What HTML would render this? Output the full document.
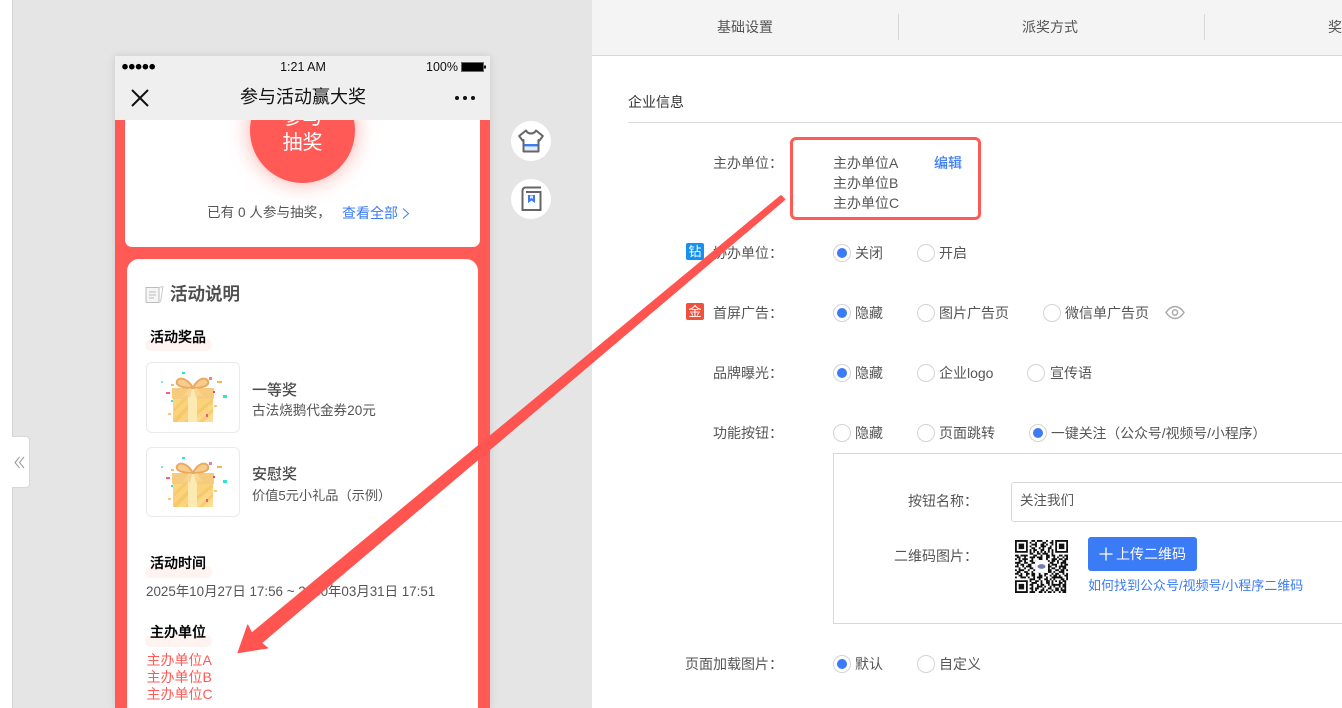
<!DOCTYPE html>
<html lang="zh">
<head>
<meta charset="utf-8">
<style>
html,body{margin:0;padding:0;width:1342px;height:708px;overflow:hidden;background:#fff}
body{position:relative;font-family:"Liberation Sans","Noto Sans CJK SC",sans-serif;font-size:14px;color:#555}
.a{position:absolute;white-space:nowrap}
.t{position:absolute;white-space:nowrap;line-height:20px;height:20px}
.r{position:absolute;border:1px solid #d4d4d4;border-radius:50%;box-sizing:border-box;background:#fff;width:18px;height:18px}
.r.on:after{content:"";position:absolute;left:3px;top:3px;width:10px;height:10px;border-radius:50%;background:#3b7bf6}
.lab{position:absolute;white-space:nowrap;line-height:20px;text-align:right;width:127px}
.sub{position:absolute;left:145px;width:67px;height:12px;background:#fff3f2;border-radius:6px}
.subt{position:absolute;left:150px;font-size:14px;font-weight:500;color:#000;line-height:20px;white-space:nowrap;-webkit-text-stroke:.25px #000}
.thumb{position:absolute;left:146px;width:94px;border:1px solid #eaeaea;border-radius:6px;box-sizing:border-box;background:#fff}
</style>
</head>
<body>
<!-- left zone -->
<div class="a" style="left:12px;top:0;width:580px;height:708px;background:#e5e5e5"></div>
<div class="a" style="left:12px;top:0;width:1px;height:708px;background:#d2d2d2"></div>
<div class="a" style="left:12px;top:436px;width:18px;height:52px;background:#fff;border:1px solid #d8d8d8;border-left:0;border-radius:0 4px 4px 0;box-sizing:border-box"></div>
<svg class="a" style="left:14px;top:456px" width="12" height="13" viewBox="0 0 12 13"><path d="M5.500 1 1 6.500 5.500 12M10 1 5.500 6.500 10 12" fill="none" stroke="#999" stroke-width="1"/></svg>

<!-- phone -->
<div class="a" style="left:115px;top:56px;width:375px;height:652px;background:#ff5a56;box-shadow:0 0 8px rgba(0,0,0,.12);overflow:hidden">
  <div class="a" style="left:10px;top:0;width:355px;height:191px;background:#fff;border-radius:0 0 7px 7px"></div>
  <div class="a" style="left:135px;top:22px;width:105px;height:105px;border-radius:50%;background:#ff5a56;box-shadow:0 0 20px rgba(255,90,86,.5)"></div>
  <div class="a" style="left:135px;top:50px;width:105px;text-align:center;color:#fff;font-size:20px;line-height:25px">参与<br>抽奖</div>
  <div class="a" style="left:0;top:0;width:375px;height:64px;background:#efefef"></div>
  <div class="a" style="left:12px;top:203px;width:351px;height:460px;background:#fff;border-radius:12px"></div>
</div>
<svg class="a" style="left:121px;top:62px" width="36" height="9"><g fill="#000"><circle cx="4" cy="4.700" r="2.800"/><circle cx="10.800" cy="4.700" r="2.800"/><circle cx="17.600" cy="4.700" r="2.800"/><circle cx="24.400" cy="4.700" r="2.800"/><circle cx="31.200" cy="4.700" r="2.800"/></g></svg>
<div class="t" style="left:252px;top:57px;width:102px;text-align:center;font-size:12.500px;color:#111">1:21 AM</div>
<div class="t" style="left:426px;top:57px;font-size:12.500px;color:#111">100%</div>
<svg class="a" style="left:461px;top:62px" width="26" height="11"><rect x=".5" y=".5" width="22" height="9" fill="#000" stroke="#666"/><rect x="23" y="3.500" width="2" height="3" fill="#111"/></svg>
<svg class="a" style="left:131px;top:89px" width="18" height="18"><path d="M1 1 17 17M17 1 1 17" stroke="#111" stroke-width="2" fill="none"/></svg>
<div class="t" style="left:203px;top:86px;width:200px;text-align:center;font-size:18px;line-height:22px;height:22px;color:#111">参与活动赢大奖</div>
<svg class="a" style="left:453px;top:94px" width="24" height="8"><g fill="#111"><circle cx="4" cy="4" r="2"/><circle cx="12" cy="4" r="2"/><circle cx="20" cy="4" r="2"/></g></svg>

<div class="t" style="left:207px;top:203px;font-size:13.600px;color:#555">已有 0 人参与抽奖，</div>
<div class="t" style="left:342px;top:203px;font-size:14px;color:#3b7bf6">查看全部</div>
<svg class="a" style="left:402px;top:207px" width="9" height="12"><path d="M1 1.500 6.500 6.500 1 11.500" fill="none" stroke="#3b7bf6" stroke-width="1"/></svg>

<!-- side buttons -->
<div class="a" style="left:511px;top:121px;width:40px;height:40px;border-radius:50%;background:#fff"></div>
<svg class="a" style="left:518px;top:129px" width="26" height="24" viewBox="0 0 26 24"><path d="M8 1.500 1.200 7l3.300 4.500 1-.5V22.500h15V11l1 .5L24.800 7 18 1.500c-1 2-3 3-5 3s-4-1-5-3z" fill="#fff" stroke="#666" stroke-width="2" stroke-linejoin="round"/><rect x="6.500" y="17" width="13" height="4.500" fill="#e3eafa"/><rect x="6.500" y="15" width="13" height="2.400" fill="#3b7bf6"/></svg>
<div class="a" style="left:511px;top:179px;width:40px;height:40px;border-radius:50%;background:#fff"></div>
<svg class="a" style="left:519px;top:185px" width="24" height="26" viewBox="0 0 24 26"><path d="M22 2.500H7C4.500 2.500 3.500 4 3.500 6V25h18V7H7" fill="none" stroke="#666" stroke-width="2"/><path d="M9 10v8l3.500-2.500L16 18v-8z" fill="#3b7bf6"/><path d="M11 10.500v3.500l1.500-1 1.500 1v-3.500z" fill="#dfe9fd"/></svg>

<!-- desc -->
<svg class="a" style="left:145px;top:285px" width="19" height="19" viewBox="0 0 19 19"><path d="M1 2.500h13V17.500H2c-.6 0-1-.4-1-1z" fill="#f5f5f5" stroke="#bbb"/><path d="M14 2.500 18 1.500 15.500 17" fill="none" stroke="#ccc"/><path d="M4 7h7M4 10h7M4 13h5" stroke="#bbb" stroke-width="1.100"/></svg>
<div class="t" style="left:170px;top:284px;font-size:17.500px;font-weight:500;color:#4c4c4c;-webkit-text-stroke:.3px #4c4c4c">活动说明</div>

<div class="sub" style="top:339px"></div>
<div class="subt" style="top:327px">活动奖品</div>

<div class="thumb" style="top:362px;height:71px"></div>
<div class="thumb" style="top:447px;height:70px"></div>
<svg class="a" style="left:160px;top:370px" width="70" height="58" viewBox="0 0 70 58">
<defs><linearGradient id="g" x1="0" y1="0" x2="1" y2="1"><stop offset="0" stop-color="#fbd67f"/><stop offset=".5" stop-color="#fad27a"/><stop offset="1" stop-color="#fde095"/></linearGradient>
<g id="gift">
<rect x="13" y="26" width="40" height="26" fill="url(#g)"/>
<path d="M14 38 26 26h4L14 42zM14 49 37 26h3L17 52h-3zM24 52 53 28v4L29 52zM38 52 53 38v4L43 52z" fill="#f6bd5f" opacity=".55"/>
<rect x="12" y="18" width="42" height="11" rx="1" fill="#f7cb7e"/>
<rect x="28" y="18" width="9" height="34" fill="#fdeab2"/>
<path d="M33 18C28 9 20 6 17 11c-2 5 6 7 16 7zM33 18c4-9 12-12 15-7 2 5-6 7-15 7z" fill="#f6cd8a" stroke="#eba860" stroke-width="2"/>
<path d="M29 18 23 27 27 25 30 28 32 19zM37 18 43 27 39 25 36 28 34 19z" fill="#f8d691"/>
<rect x="22" y="2" width="3" height="2" fill="#2fe6c5"/><rect x="1" y="11" width="2" height="2" fill="#7ce9de"/><rect x="11" y="14" width="3" height="2" fill="#f8bb5a"/><rect x="6" y="22" width="4" height="2" fill="#f2607a"/><rect x="49" y="7" width="3" height="3" fill="#f27a9a"/><rect x="57" y="11" width="5" height="2" fill="#f6b64c"/><rect x="63" y="25" width="4" height="3" fill="#2fe6c5"/><rect x="11" y="30" width="2" height="2" fill="#2fe6c5"/><rect x="8" y="43" width="3" height="2" fill="#f6c97a"/><rect x="53" y="21" width="2" height="2" fill="#e24a60"/><rect x="54" y="35" width="3" height="2" fill="#f6c97a"/><rect x="46" y="44" width="2" height="3" fill="#e85a80"/>
</g></defs>
<use href="#gift"/>
</svg>
<svg class="a" style="left:160px;top:455px" width="70" height="58" viewBox="0 0 70 58"><use href="#gift"/></svg>
<div class="t" style="left:252px;top:381px;font-size:15px;font-weight:500;color:#4c4c4c">一等奖</div>
<div class="t" style="left:252px;top:401px;font-size:13.600px;color:#555">古法烧鹅代金券20元</div>
<div class="t" style="left:252px;top:465px;font-size:15px;font-weight:500;color:#4c4c4c">安慰奖</div>
<div class="t" style="left:252px;top:486px;font-size:13.200px;color:#555">价值5元小礼品（示例）</div>

<div class="sub" style="top:566px"></div>
<div class="subt" style="top:553px">活动时间</div>
<div class="t" style="left:146px;top:582px;font-size:13.400px;color:#555">2025年10月27日 17:56 ~ 2030年03月31日 17:51</div>
<div class="sub" style="top:635px"></div>
<div class="subt" style="top:622px">主办单位</div>
<div class="a" style="left:146.500px;top:652px;font-size:14px;line-height:17px;color:#ff5a56">主办单位A<br>主办单位B<br>主办单位C</div>

<!-- right panel -->
<div class="a" style="left:592px;top:0;width:750px;height:56px;background:#f4f4f4;border-bottom:1px solid #d8d8d8;box-sizing:border-box"></div>
<div class="t" style="left:717px;top:17px;color:#555">基础设置</div>
<div class="a" style="left:898px;top:14px;width:1px;height:26px;background:#d8d8d8"></div>
<div class="t" style="left:1022px;top:17px;color:#555">派奖方式</div>
<div class="a" style="left:1204px;top:14px;width:1px;height:26px;background:#d8d8d8"></div>
<div class="t" style="left:1328px;top:17px;color:#555">奖品设置</div>

<div class="t" style="left:628px;top:92px;color:#333">企业信息</div>
<div class="a" style="left:628px;top:122px;width:714px;height:1px;background:#dcdcdc"></div>

<div class="lab" style="left:656px;top:153px">主办单位：</div>
<div class="a" style="left:833px;top:153px;line-height:20px">主办单位A<br>主办单位B<br>主办单位C</div>
<div class="t" style="left:934px;top:153px;color:#3b7bf6;-webkit-text-stroke:.2px #3b7bf6">编辑</div>

<div class="lab" style="left:656px;top:243px">协办单位：</div>
<div class="a" style="left:686px;top:243px;width:18px;height:17px;background:#1890f0;border-radius:2px;color:#fff;font-size:13px;line-height:18px;text-align:center">钻</div>
<div class="r on" style="left:833px;top:244px"></div><div class="t" style="left:855px;top:243px">关闭</div>
<div class="r" style="left:917px;top:244px"></div><div class="t" style="left:939px;top:243px">开启</div>

<div class="a" style="left:686px;top:303px;width:18px;height:17px;background:#f0503e;border-radius:2px;color:#fff;font-size:13px;line-height:18px;text-align:center">金</div>
<div class="lab" style="left:656px;top:303px">首屏广告：</div>
<div class="r on" style="left:833px;top:304px"></div><div class="t" style="left:855px;top:303px">隐藏</div>
<div class="r" style="left:917px;top:304px"></div><div class="t" style="left:939px;top:303px">图片广告页</div>
<div class="r" style="left:1043px;top:304px"></div><div class="t" style="left:1065px;top:303px">微信单广告页</div>
<svg class="a" style="left:1165px;top:305px" width="20" height="15" viewBox="0 0 20 15"><path d="M1 7.500C4 3 7 1.500 10 1.500s6 1.500 9 6c-3 4.500-6 6-9 6s-6-1.500-9-6z" fill="none" stroke="#aaa" stroke-width="1.500"/><circle cx="10" cy="7.500" r="2.600" fill="none" stroke="#aaa" stroke-width="1.500"/></svg>

<div class="lab" style="left:656px;top:363px">品牌曝光：</div>
<div class="r on" style="left:833px;top:364px"></div><div class="t" style="left:855px;top:363px">隐藏</div>
<div class="r" style="left:917px;top:364px"></div><div class="t" style="left:939px;top:363px">企业logo</div>
<div class="r" style="left:1027px;top:364px"></div><div class="t" style="left:1050px;top:363px">宣传语</div>

<div class="lab" style="left:656px;top:423px">功能按钮：</div>
<div class="r" style="left:833px;top:424px"></div><div class="t" style="left:855px;top:423px">隐藏</div>
<div class="r" style="left:917px;top:424px"></div><div class="t" style="left:939px;top:423px">页面跳转</div>
<div class="r on" style="left:1029px;top:424px"></div><div class="t" style="left:1051px;top:423px;font-size:13.850px">一键关注（公众号/视频号/小程序）</div>

<div class="a" style="left:833px;top:453px;width:520px;height:171px;border:1px solid #d8d8d8;box-sizing:border-box"></div>
<div class="lab" style="left:851px;top:491px">按钮名称：</div>
<div class="a" style="left:1011px;top:482px;width:350px;height:40px;border:1px solid #d8d8d8;border-radius:3px;box-sizing:border-box"></div>
<div class="t" style="left:1020px;top:491px;font-size:13.500px">关注我们</div>
<div class="lab" style="left:851px;top:546px">二维码图片：</div>

<svg class="a" style="left:1015px;top:540px" width="53" height="53" viewBox="0 0 29 29" shape-rendering="geometricPrecision">
<path fill="none" stroke="#111" d="M0 .5h7m2 0h2m1 0h3m2 0h1m2 0h1m1 0h7M0 1.500h1m5 0h1m1 0h1m2 0h1m3 0h2m2 0h2m1 0h1m5 0h1M0 2.500h1m1 0h3m1 0h1m2 0h3m2 0h2m1 0h1m2 0h1m1 0h1m1 0h3m1 0h1M0 3.500h1m1 0h3m1 0h1m1 0h1m2 0h1m2 0h3m2 0h1m2 0h1m1 0h3m1 0h1M0 4.500h1m1 0h3m1 0h1m2 0h2m2 0h1m1 0h1m2 0h2m2 0h1m1 0h3m1 0h1M0 5.500h1m5 0h1m1 0h1m1 0h2m2 0h2m2 0h1m1 0h1m1 0h1m5 0h1M0 6.500h7m1 0h1m1 0h1m1 0h1m1 0h1m1 0h1m1 0h1m1 0h1m1 0h7M8 7.500h2m2 0h2m1 0h3m2 0h1M0 8.500h2m1 0h4m3 0h2m2 0h1m2 0h2m1 0h2m2 0h2m1 0h3M1 9.500h2m2 0h1m2 0h3m1 0h3m2 0h2m2 0h1m1 0h1m2 0h1m1 0h1M0 10.500h1m1 0h1m1 0h3m2 0h1m3 0h2m2 0h1m2 0h3m1 0h2m1 0h2M2 11.500h2m1 0h1m2 0h2m1 0h1m5 0h2m1 0h2m1 0h1m2 0h2M0 12.500h3m2 0h2m2 0h2m8 0h2m2 0h1m1 0h3m1 0h1M1 13.500h1m1 0h2m2 0h2m2 0h1m6 0h1m1 0h3m2 0h1m1 0h2M0 14.500h2m2 0h1m1 0h3m2 0h1m6 0h2m2 0h1m1 0h4m1 0h1M2 15.500h1m2 0h1m2 0h2m1 0h1m6 0h1m1 0h2m2 0h1m1 0h2M0 16.500h1m1 0h3m2 0h1m2 0h2m1 0h4m1 0h2m2 0h2m1 0h2m1 0h1M1 17.500h2m2 0h2m2 0h1m2 0h2m1 0h1m2 0h2m1 0h1m2 0h3M0 18.500h2m1 0h1m2 0h2m1 0h2m2 0h1m2 0h2m2 0h1m1 0h2m2 0h1m1 0h1M2 19.500h2m2 0h1m2 0h2m2 0h2m1 0h1m2 0h1m1 0h2m1 0h1m2 0h2M0 20.500h1m2 0h3m1 0h1m2 0h1m1 0h3m2 0h1m2 0h6m2 0h1M8 21.500h3m2 0h1m2 0h2m1 0h1m1 0h1m3 0h2m1 0h1M0 22.500h7m1 0h1m2 0h2m1 0h1m2 0h2m1 0h1m1 0h1m1 0h1m1 0h2M0 23.500h1m5 0h1m2 0h3m2 0h1m2 0h2m1 0h1m3 0h2m1 0h1M0 24.500h1m1 0h3m1 0h1m1 0h2m2 0h1m1 0h2m2 0h1m1 0h5m1 0h2M0 25.500h1m1 0h3m1 0h1m2 0h1m2 0h3m1 0h1m2 0h1m1 0h1m2 0h1m1 0h2M0 26.500h1m1 0h3m1 0h1m1 0h2m1 0h2m2 0h1m2 0h2m2 0h2m1 0h1m1 0h1M0 27.500h1m5 0h1m2 0h1m1 0h1m2 0h2m1 0h1m2 0h1m1 0h2m1 0h3M0 28.500h7m1 0h3m2 0h2m1 0h1m1 0h2m1 0h1m2 0h1m1 0h2"/>
<rect x="11" y="11" width="7" height="7" fill="#fff"/><ellipse cx="14.500" cy="14.500" rx="2.200" ry="1.300" fill="#6f7fb5"/>
</svg>

<div class="a" style="left:1088px;top:537px;width:109px;height:34px;background:#3b7bf6;border-radius:3px"></div>
<svg class="a" style="left:1099px;top:547px" width="14" height="14"><path d="M7 .500V13.500M.5 7H13.500" stroke="#fff" stroke-width="1.300"/></svg>
<div class="t" style="left:1116px;top:544px;font-size:14px;color:#fff">上传二维码</div>
<div class="t" style="left:1088px;top:576px;font-size:13px;color:#3b7bf6">如何找到公众号/视频号/小程序二维码</div>

<div class="lab" style="left:656px;top:654px">页面加载图片：</div>
<div class="r on" style="left:833px;top:655px"></div><div class="t" style="left:855px;top:654px">默认</div>
<div class="r" style="left:917px;top:655px"></div><div class="t" style="left:939px;top:654px">自定义</div>

<!-- annotations -->
<div class="a" style="left:790px;top:137px;width:191px;height:83px;border:3px solid #ff5a56;border-radius:6px;box-sizing:border-box"></div>
<svg class="a" style="left:0;top:0" width="1342" height="708"><path d="M781 195.500 785 199.500 261.500 643 267.700 648 238 652.700 247.700 625 251.700 633z" fill="#ff5450" stroke="#ff5450" stroke-width="1" stroke-linejoin="round"/></svg>
</body>
</html>
